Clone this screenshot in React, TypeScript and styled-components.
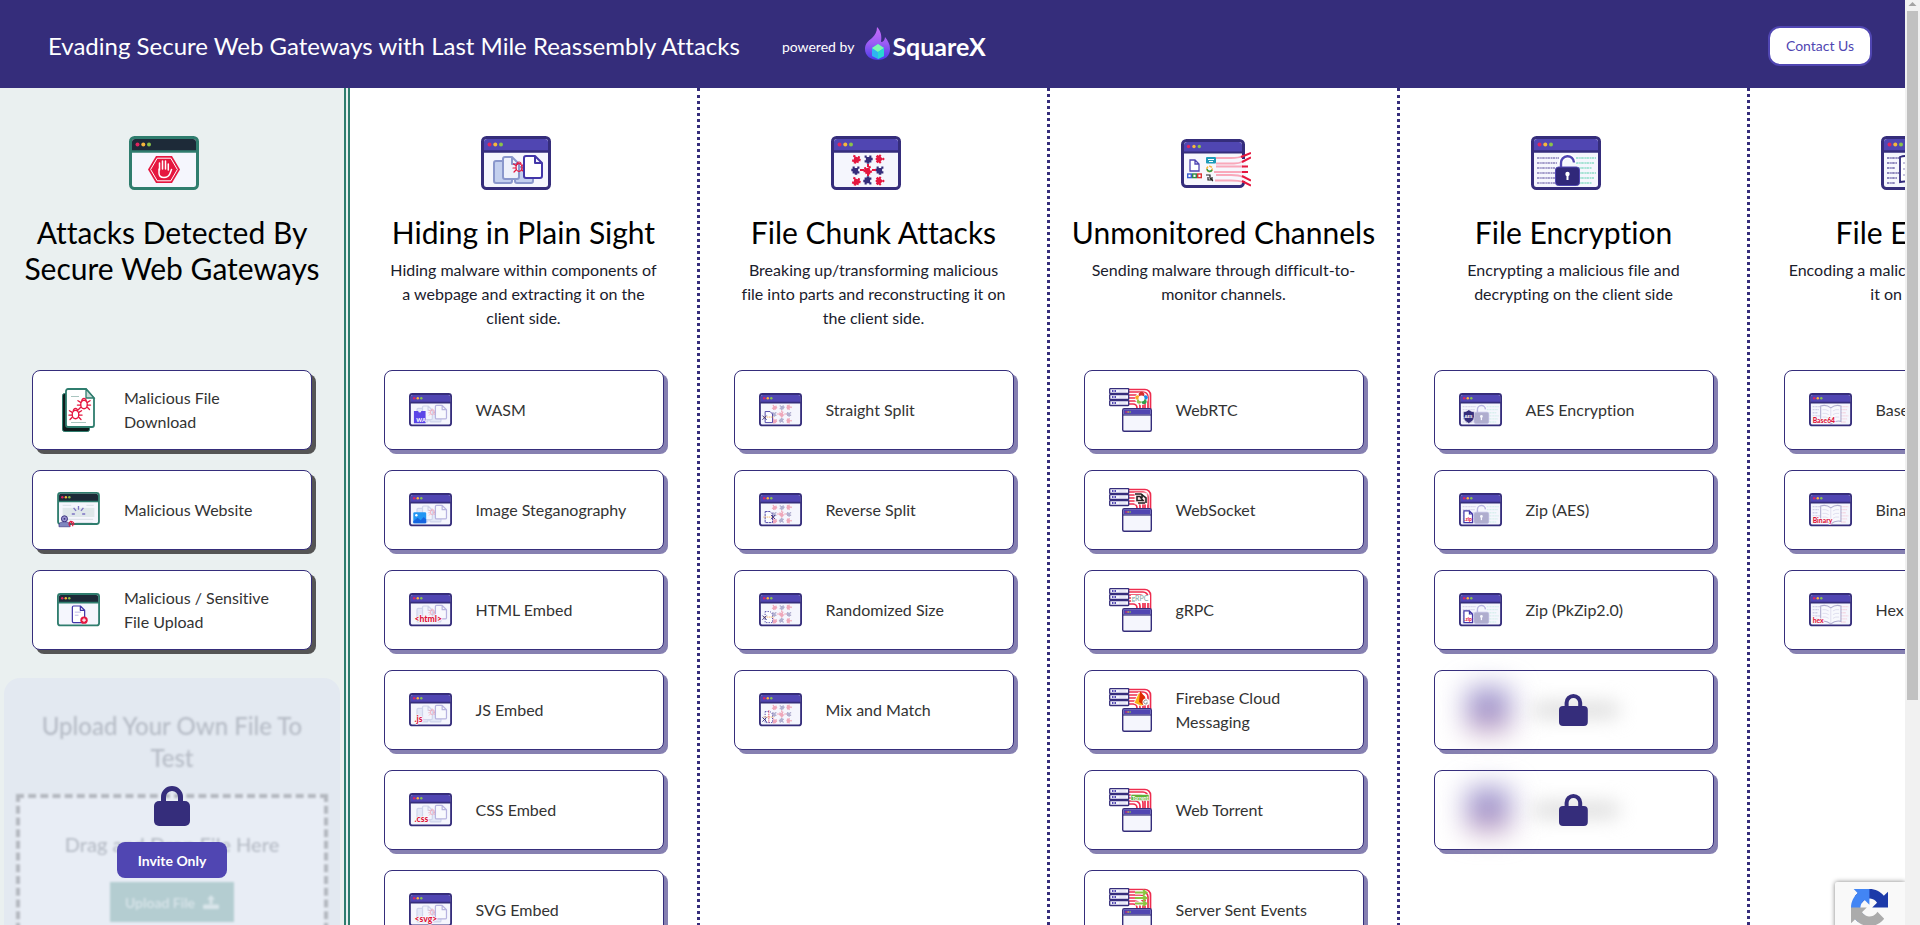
import React from 'react';
import styled, { createGlobalStyle } from 'styled-components';

const navy = '#352d7b';
const violet = '#5046b2';
const teal = '#2f7d6e';
const red = '#e5173f';

const GlobalStyle = createGlobalStyle`
  *, *::before, *::after { box-sizing: border-box; }
  body {
    margin: 0;
    background: #fff;
    font-family: Lato, "Noto Sans", sans-serif;
    font-variant-ligatures: none;
  }
  h1, h2, h3, p, ul { margin: 0; padding: 0; font-weight: 400; }
  button { font-family: inherit; font-variant-ligatures: none; cursor: pointer; }
`;

/* ---------- page frame ---------- */

const Shell = styled.div`
  display: flex;
  height: 100vh;
  overflow: hidden;
`;

const Page = styled.div`
  flex: 1;
  min-width: 0;
  display: flex;
  flex-direction: column;
`;

const ScrollTrack = styled.div`
  width: 15px;
  padding: 0 2px;
  background: #f1f1f1;
  display: flex;
  flex-direction: column;
`;

const ScrollArrow = styled.svg`
  width: 11px;
  height: 11px;
  flex: none;
`;

const ScrollThumb = styled.div`
  flex: 689;
  background: #c1c1c1;
`;

const ScrollRest = styled.div`
  flex: 225;
`;

/* ---------- header ---------- */

const Header = styled.header`
  display: flex;
  align-items: center;
  height: 88px;
  flex: none;
  padding: 4px 33px 0 48px;
  background: ${navy};
  color: #fff;
`;

const Title = styled.h1`
  font-size: 24px;
  line-height: 32px;
`;

const Brand = styled.a`
  display: flex;
  align-items: center;
  margin-left: 42px;
  padding-bottom: 4px;
  color: #fff;
  text-decoration: none;
`;

const PoweredBy = styled.span`
  font-size: 14px;
  line-height: 20px;
  padding-top: 6px;
  margin-right: 10px;
`;

const BrandName = styled.span`
  font-size: 25px;
  line-height: 32px;
  font-weight: 700;
  padding-top: 4px;
`;

const ContactButton = styled.button`
  margin-left: auto;
  width: 104px;
  height: 40px;
  border: 2px solid ${violet};
  border-radius: 12px;
  background: #fff;
  color: ${violet};
  font-size: 14px;
  line-height: 20px;
`;

/* ---------- columns ---------- */

const Columns = styled.main`
  flex: 1;
  display: flex;
  overflow: auto;
  scrollbar-width: none;
`;

const Column = styled.section<{ $detected?: boolean }>`
  flex: none;
  width: 350px;
  height: max-content;
  min-height: 100%;
  display: flex;
  flex-direction: column;
  background: ${p => (p.$detected ? '#eaf0f0' : '#fff')};
  border-right: ${p => (p.$detected ? `6px double ${teal}` : `3px dotted ${navy}`)};
`;

const ColumnHead = styled.div`
  min-height: 282px;
  padding: 40px 16px 0;
  display: flex;
  flex-direction: column;
  align-items: center;
  text-align: center;
`;

const HeadIcon = styled.div`
  width: 86px;
  height: 70px;
  padding-right: 16px;
  margin-bottom: 16px;
  display: flex;
  align-items: center;
`;

const ColumnTitle = styled.h2`
  font-size: 30px;
  line-height: 36px;
  margin-bottom: 8px;
  color: #000;
`;

const Description = styled.p`
  max-width: 272px;
  font-size: 16px;
  line-height: 24px;
  color: #1a202c;
`;

const CardList = styled.ul`
  list-style: none;
  display: flex;
  flex-direction: column;
  align-items: center;
  gap: 20px;
`;

const Card = styled.button<{ $detected?: boolean; $locked?: boolean }>`
  position: relative;
  width: 280px;
  height: 80px;
  padding: 0 ${p => (p.$locked ? 32 : 24)}px;
  display: flex;
  align-items: center;
  gap: 24px;
  background: #fff;
  border: 1px solid ${navy};
  border-radius: 8px;
  box-shadow: 4px 4px 0 ${p => (p.$detected ? '#555' : '#8680b1')};
  color: #333;
  font-size: 16px;
  line-height: 24px;
  text-align: left;

  & > svg { flex: none; }
`;

const BlurredIcon = styled.span`
  width: 43px;
  height: 44px;
  background: linear-gradient(#9a90cb 50%, #cfa3bd);
  filter: blur(14px);
`;

const BlurredLabel = styled.span`
  width: 84px;
  height: 12px;
  background: #d0d0d0;
  filter: blur(10px);
`;

const CardLock = styled.span`
  position: absolute;
  inset: 0;
  display: flex;
  align-items: center;
  justify-content: center;
`;

/* ---------- upload panel ---------- */

const UploadPanel = styled.div`
  position: relative;
  margin: 28px 4px 16px;
  border-radius: 16px;
  background: #e3e9f1;
`;

const UploadBody = styled.div`
  padding: 32px 12px 20px;
  filter: blur(1px);
  text-align: center;
  color: #b6bcc6;
`;

const UploadTitle = styled.h3`
  font-size: 24px;
  line-height: 32px;
  font-weight: 500;
  padding: 0 16px;
  margin-bottom: 20px;
`;

const DropZone = styled.div`
  border: 4px dashed #b3b7bf;
  background: #e8edf5;
  padding: 34px 16px 40px;
  display: flex;
  flex-direction: column;
  align-items: center;
  gap: 26px;
`;

const DropText = styled.p`
  font-size: 20px;
  line-height: 24px;
  font-weight: 500;
`;

const UploadButton = styled.button`
  width: 124px;
  height: 40px;
  border: 0;
  background: #b4cdd1;
  color: #d9e5ea;
  display: flex;
  align-items: center;
  justify-content: center;
  gap: 8px;
  font-size: 14px;
  font-weight: 600;
`;

const UploadOverlay = styled.div`
  position: absolute;
  inset: 0;
  display: flex;
  flex-direction: column;
  align-items: center;
  justify-content: center;
  gap: 16px;
`;

const InviteButton = styled.button`
  width: 110px;
  height: 36px;
  border: 0;
  border-radius: 8px;
  background: ${violet};
  color: #fff;
  font-size: 14px;
  font-weight: 700;
`;

const Captcha = styled.aside`
  position: fixed;
  right: 15px;
  bottom: -17px;
  width: 70px;
  height: 60px;
  padding: 7px 16px;
  background: #f9f9f9;
  border-radius: 2px 0 0 2px;
  box-shadow: 0 0 5px gray;
  clip-path: inset(-8px 0 -8px -8px);
`;

/* ---------- drawings ---------- */

const Lock = ({ size }: { size: number }) => (
  <svg width={size * 0.9} height={size} viewBox="0 0 36 40" aria-hidden="true">
    <rect x="0" y="15" width="36" height="25" rx="5" fill={navy} />
    <path d="M9.500 17V11a8.500 8.500 0 0 1 17 0v6" fill="none" stroke={navy} strokeWidth="5" />
  </svg>
);

const Flame = () => (
  <svg width="28" height="34" viewBox="0 0 28 34" aria-hidden="true">
    <defs>
      <linearGradient id="flame" x1="0" y1="0" x2="0" y2="1">
        <stop offset="0" stopColor="#c86bfa" />
        <stop offset="0.5" stopColor="#9a5cf5" />
        <stop offset="1" stopColor="#4b3be8" />
      </linearGradient>
    </defs>
    <path d="M13 0c4 4 5 9 4 15 2 0 4-2 4-5 3 4 5 7 5 12 0 7-5 11-12 11S1 29 1 22c0-5 3-8 7-11 3-3 5-6 5-11z" fill="url(#flame)" />
    <path d="M14 17l6 4v8l-6 3-6-3v-8z" fill="#2fb4f0" />
    <path d="M14 17l6 4-6 4-6-4z" fill="#7dfab0" />
    <path d="M14 25l6-4v8l-6 3z" fill="#28d7d2" />
  </svg>
);

type Kids = { children?: React.ReactNode };

const WindowFrame = ({ green, children, w = 70 }: Kids & { green?: boolean; w?: number }) => (
  <g>
    <rect x="1.500" y="1.500" width={w - 3} height="51" rx="4" fill="#f5f6fd" stroke={green ? teal : navy} strokeWidth="3" />
    <path d={`M3 16V6a3 3 0 0 1 3-3H${w - 6}a3 3 0 0 1 3 3V16z`} fill={green ? '#1d2a38' : violet} />
    <path d={`M2 15.500H${w - 2}`} stroke={green ? teal : navy} strokeWidth="2.500" />
    <circle cx="8.500" cy="8.500" r="2" fill="#e0245e" />
    <circle cx="14.300" cy="8.500" r="2" fill="#f6b73c" />
    <circle cx="20" cy="8.500" r="2" fill="#8bc34a" />
    {children}
  </g>
);

const Sheet = ({ x, y, w, h, fill, stroke }: { x: number; y: number; w: number; h: number; fill: string; stroke: string }) => (
  <path
    d={`M${x + 2} ${y}h${w - 9}l7 7v${h - 9}a2 2 0 0 1-2 2h${4 - w}a2 2 0 0 1-2-2v${4 - h}a2 2 0 0 1 2-2zM${x + w - 7} ${y}v7h7`}
    fill={fill}
    stroke={stroke}
    strokeWidth="2"
    strokeLinejoin="round"
  />
);

const Bug = ({ x, y, s = 1 }: { x: number; y: number; s?: number }) => (
  <g transform={`translate(${x} ${y}) scale(${s})`} fill="none" stroke={red} strokeWidth="1.200" strokeLinecap="round">
    <ellipse cx="0" cy="0.500" rx="3" ry="3.800" />
    <path d="M-2-3a2 2 0 0 1 4 0M-3-1.500l-2.500-1.500M3-1.500l2.500-1.500M-3 1h-3M3 1h3M-3 3l-2 2M3 3l2 2" />
  </g>
);

const Docs = () => (
  <>
    <Sheet x={13} y={25} w={18} h={22} fill="#c3cfee" stroke="#8a97cc" />
    <Sheet x={34} y={31} w={18} h={16} fill="#c3cfee" stroke="#8a97cc" />
    <Sheet x={22} y={21} w={16} h={22} fill="#eef1fb" stroke="#8a97cc" />
    <Bug x={38} y={31} />
    <Sheet x={43} y={20} w={18} h={22} fill="#fff" stroke="#4236a8" />
  </>
);

const Piece = ({ x, y, r, c }: { x: number; y: number; r: number; c: string }) => (
  <path
    transform={`translate(${x} ${y}) rotate(${r}) scale(0.850)`}
    d="M-4-4h2.500v1.500h3V-4H4v2.500h1.500v3H4V4H1.500v1.500h-3V4H-4V1.500h1.500v-3H-4z"
    fill={c}
  />
);

const Puzzle = () => (
  <>
    {[0, 1, 2].map(r =>
      [0, 1, 2].map(c => (
        <Piece key={`${r}${c}`} x={25 + c * 12} y={23 + r * 11} r={(r + c) % 2 ? r * 90 : 15 + c * 60} c={(r + c) % 2 ? navy : red} />
      )),
    )}
    <path d="M29 34h4M41 34h4M37 28v3M37 37v3" stroke={red} strokeWidth="2" />
  </>
);

const CodeLines = ({ x, w, c }: { x: number; w: number; c: string }) => (
  <path
    d={[22, 27, 32, 37, 42, 47].map((y, i) => `M${x} ${y}h${w - (i % 3) * 2}`).join('')}
    stroke={c}
    strokeWidth="2.200"
    strokeDasharray="2.500 0.700 1.500 0.500"
  />
);

const OpenLock = () => (
  <>
    <CodeLines x={6} w={22} c="#a39dcb" />
    <CodeLines x={45} w={20} c="#a6e3d4" />
    <path d="M30 32v-5a6.500 6.500 0 0 1 13-0.500" fill="none" stroke="#fff" strokeWidth="5" />
    <path d="M30 32v-5a6.500 6.500 0 0 1 13-0.500" fill="none" stroke={violet} strokeWidth="2.400" />
    <rect x="24.500" y="31" width="24" height="18.500" rx="3" fill="#30287a" stroke={violet} />
    <circle cx="36.500" cy="38" r="2.200" fill="#fff" />
    <path d="M36.500 38v6" stroke="#fff" strokeWidth="2" />
  </>
);

const Book = () => (
  <>
    <CodeLines x={6} w={12} c="#8d86bd" />
    <CodeLines x={52} w={12} c="#f29aae" />
    <path d="M19 21q9-3 16.500 3q8-6 16.500-3v25q-9-2-16.500 4q-8-6-16.500-4z" fill="#fff" stroke="#30287a" strokeWidth="1.800" />
    <path d="M35.500 24v26M22 27q6-1 10 2M22 33q6-1 10 2M22 39q6-1 10 2M49 27q-6-1-10 2M49 33q-6-1-10 2M49 39q-6-1-10 2" fill="none" stroke="#8d86bd" />
  </>
);

const HeadSvg = ({ children }: Kids) => (
  <svg width="70" height="54" viewBox="0 0 70 54" aria-hidden="true">{children}</svg>
);

const StopIcon = () => (
  <HeadSvg>
    <WindowFrame green>
      <path d="M27 20h16l8 13.500L43 47H27l-8-13.500z" fill={red} />
      <path d="M28.200 22.200h13.600l6.600 11.300-6.600 11.300H28.200l-6.600-11.300z" fill="none" stroke="#fff" strokeWidth="1" />
      <path d="M30.500 34v-7M33.500 33v-8M36.500 33v-8M39.300 34v-6M30 33v4c0 3 2 4.500 5 4.500s5-1.500 6-4l1.500-4" fill="none" stroke="#fff" strokeWidth="1.500" strokeLinecap="round" />
    </WindowFrame>
  </HeadSvg>
);

const ChannelsIcon = () => (
  <HeadSvg>
    <g transform="translate(0 3)">
      <rect x="1.500" y="1.500" width="61" height="46" rx="4" fill="#f7f7fd" stroke={navy} strokeWidth="3" />
      <path d="M3 14V6a3 3 0 0 1 3-3h52a3 3 0 0 1 3 3v8z" fill={violet} />
      <path d="M2 13.500h60" stroke={navy} strokeWidth="2" />
      <circle cx="7.500" cy="7.500" r="1.700" fill="#e0245e" />
      <circle cx="13" cy="7.500" r="1.700" fill="#f6b73c" />
      <circle cx="18.300" cy="7.500" r="1.700" fill="#8bc34a" />
      <path d="M9 21h5l4 4v7H9zM14 21v4h4" fill="#fff" stroke={violet} strokeWidth="1.300" />
      <rect x="6.700" y="35" width="3.600" height="3.600" fill="#fff" stroke="#3a5fcf" strokeWidth="1.400" />
      <rect x="11.700" y="35" width="3.600" height="3.600" fill="#fff" stroke="#2f8a4a" strokeWidth="1.400" />
      <rect x="16.700" y="35" width="3.600" height="3.600" fill="#fff" stroke="#d33" strokeWidth="1.400" />
      <rect x="60" y="20" width="5" height="22" fill="#f7f7fd" />
      <g fill="none" stroke="#f9a8ba" strokeWidth="1.800">
        <path d="M35 19h15q8 0 12-2M35 24.500h18q5 0 9-2M35 27.500h27M33 33h29M35 36h15q8 0 12 2M34 41.500h16q8 0 12 1.500" />
      </g>
      <g fill="none" stroke={red} strokeWidth="2">
        <path d="M60 18l10-4M61 23l9-4.500M61 27.500h6M61 33h6M61 37l9 4.500M61 42l9 4.500" />
      </g>
      <rect x="25" y="18" width="10" height="6.500" rx="1" fill="#1d9ab8" />
      <path d="M27 20.500h6M28 22.500h4" stroke="#fff" />
      <circle cx="28.500" cy="30" r="2.700" fill="none" stroke="#f6b73c" strokeWidth="1.600" strokeDasharray="3 1" />
      <path d="M26 30a2.700 2.700 0 0 0 5 1" fill="none" stroke="#2f9a4a" strokeWidth="1.600" />
      <path d="M25 36h4v3l3 3M27 38v3h5M31 38v3" fill="none" stroke="#222" strokeWidth="1.200" />
    </g>
  </HeadSvg>
);

const SmallWindow = ({ children, green, base }: Kids & { green?: boolean; base?: React.ReactNode }) => (
  <svg width="43" height="34" viewBox="0 0 70 55" aria-hidden="true">
    <WindowFrame green={green}>
      <g opacity="0.350">{base}</g>
      {children}
    </WindowFrame>
  </svg>
);

const Tag = ({ text, x = 9, size = 14, y = 47 }: { text: string; x?: number; size?: number; y?: number }) => (
  <text x={x} y={y} fontFamily="Lato, sans-serif" fontSize={size} fontWeight="900" fill="#dc143c" stroke="#fff" strokeWidth="2" paintOrder="stroke">
    {text}
  </text>
);

const DocsIcon = ({ children }: Kids) => <SmallWindow base={<Docs />}>{children}</SmallWindow>;

const WasmIcon = () => (
  <DocsIcon>
    <path d="M8 29h7a2.500 2.500 0 0 0 5 0h7v20H8z" fill="#5b45e8" />
    <text x="12" y="47" fontFamily="Lato, sans-serif" fontSize="9" fontWeight="900" fill="#fff">WA</text>
  </DocsIcon>
);

const ImageIcon = () => (
  <DocsIcon>
    <rect x="7" y="31" width="21" height="18" rx="2" fill="#2196f3" />
    <circle cx="12" cy="36" r="2" fill="#fff" />
    <path d="M7 46l7-6 5 4 5-5 4 4v6H7z" fill="#1565e0" />
  </DocsIcon>
);

const SplitIcon = ({ variant }: { variant: number }) => (
  <SmallWindow base={<Puzzle />}>
    <path d="M10 30h8l4 4v14H10z" fill="#fff" fillOpacity="0.700" stroke="#4a3fa5" strokeWidth="1.500" strokeDasharray={variant > 1 ? '2 2' : variant ? '4 1' : undefined} />
    <path d="M7 39h18" stroke="#f0a03c" strokeWidth="1.200" strokeDasharray="2 1" />
    {variant === 3 && <path d="M16 28v21" stroke={red} strokeWidth="1.200" strokeDasharray="2 1" />}
    <path
      transform={variant === 1 ? 'translate(14 -1)' : variant === 3 ? 'translate(0 3)' : undefined}
      d="M6 37l6 6M12 37l-6 6"
      stroke={navy}
      strokeWidth="1.500"
      strokeLinecap="round"
    />
  </SmallWindow>
);

const AesIcon = () => (
  <SmallWindow base={<OpenLock />}>
    <path d="M16 27q4 3.500 9 3.500v8q0 7-9 11-9-4-9-11v-8q5 0 9-3.500z" fill={navy} stroke="#fff" />
    <text x="9" y="40" fontFamily="Lato, sans-serif" fontSize="7" fontWeight="900" fill="#fff">AES</text>
  </SmallWindow>
);

const ZipIcon = () => (
  <SmallWindow base={<OpenLock />}>
    <path d="M8 29h9l5 5v14H8zM17 29v5h5" fill="#fff" stroke="#4236a8" strokeWidth="2" />
    <text x="8.500" y="45" fontFamily="Lato, sans-serif" fontSize="8" fontWeight="900" fill={red}>.zip</text>
  </SmallWindow>
);

const EncodeIcon = ({ text }: { text: string }) => (
  <SmallWindow base={<Book />}>
    <Tag text={text} x={6} size={11} y={48} />
  </SmallWindow>
);

const MaliciousFileIcon = () => (
  <svg width="43" height="44" viewBox="0 0 43 44" aria-hidden="true">
    <rect x="5.500" y="5.500" width="27" height="38" rx="2" fill="#0e1c1c" stroke={teal} />
    <path d="M11 1h18l8 9v27a2 2 0 0 1-2 2H11a2 2 0 0 1-2-2V3a2 2 0 0 1 2-2z" fill="#fff" stroke={teal} strokeWidth="1.800" />
    <path d="M29 1v9h8z" fill="#c9dcd8" stroke={teal} strokeWidth="1.300" />
    <path d="M14 8.500h8M14 34.500h15" stroke="#a9c5bf" />
    <Bug x={27} y={16} s={1.1} />
    <Bug x={18.5} y={26} s={1.1} />
  </svg>
);

const MaliciousSiteIcon = () => (
  <svg width="43" height="36" viewBox="0 0 70 59" aria-hidden="true">
    <WindowFrame green>
      <path d="M9 22h14M9 45h50M48 22h12M30 50h28" stroke="#dde3ea" strokeWidth="2" />
      <rect x="9" y="26" width="52" height="15" fill="#dfe7ea" />
      <path d="M35 23v6M27 26l4 5M43 26l-4 5M24 36h5M46 36h-5" stroke="#7d74c4" strokeWidth="2.200" />
    </WindowFrame>
    <circle cx="12" cy="44" r="5" fill="#9a93cf" stroke={navy} strokeWidth="1.500" />
    <path d="M3 57v-3q0-5 9-5t9 5v3z" fill="#7f86bf" stroke={navy} />
    <circle cx="12" cy="44" r="1.500" fill={navy} />
    <path d="M22 47l4 9M27 54a4 4 0 1 0-5 2" fill="none" stroke={red} strokeWidth="1.800" />
  </svg>
);

const UploadRiskIcon = () => (
  <SmallWindow green>
    <Sheet x={25} y={21} w={20} h={27} fill="#fff" stroke="#4236a8" />
    <path d="M29 31h10M29 36h6" stroke="#b9b3e4" strokeWidth="1.500" />
    <circle cx="44" cy="44" r="6" fill={red} />
    <path d="M44 41v6M41 44h6" stroke="#fff" strokeWidth="1.800" />
  </SmallWindow>
);

const ServerIcon = ({ children }: Kids) => (
  <svg width="43" height="44" viewBox="0 0 43 44" aria-hidden="true">
    <g fill="none" stroke="#ee2c4e" strokeWidth="1.700">
      <path d="M20 1.500h16a5.500 5.500 0 0 1 5.500 5.500v14M20 4h14a5 5 0 0 1 5 5v12M20 7h11a5 5 0 0 1 5 5v9M20 10h9a5 5 0 0 1 5 5v6M20 13h6a5 5 0 0 1 5 5v3M20 16h4a4 4 0 0 1 4 4v1" />
    </g>
    {children}
    {[0, 6, 12].map(y => (
      <g key={y}>
        <rect x="0.700" y={y + 0.7} width="19" height="4.800" rx="0.500" fill="#f4f4fd" stroke={navy} strokeWidth="1.300" />
        <path d={`M3 ${y + 3}h1.500M5.500 ${y + 3}h1.500`} stroke={violet} strokeWidth="1.800" />
        <path d={`M10 ${y + 3}h7`} stroke="#dcdcf2" />
      </g>
    ))}
    <rect x="13.700" y="20.700" width="28.600" height="22.600" rx="1.500" fill="#f5f6fd" stroke={navy} strokeWidth="1.400" />
    <path d="M14.400 21.400h27.200v5H14.400z" fill={violet} />
    <path d="M14 27h28" stroke={navy} strokeWidth="1.200" />
    <path d="M16.500 24h1.300" stroke="#e0245e" strokeWidth="1.300" />
    <path d="M18.500 24h1.300" stroke="#f6b73c" strokeWidth="1.300" />
    <path d="M20.500 24h1.300" stroke="#8bc34a" strokeWidth="1.300" />
  </svg>
);

const WebRtcIcon = () => (
  <ServerIcon>
    <circle cx="32.500" cy="10.500" r="6.500" fill="#fff" />
    <circle cx="32.500" cy="6.500" r="2.800" fill="#d32f2f" />
    <circle cx="28.500" cy="9.500" r="2.300" fill="#f9a825" />
    <circle cx="36.500" cy="9.500" r="2.300" fill="#1e88e5" />
    <circle cx="30" cy="13.500" r="2.300" fill="#8bc34a" />
    <circle cx="35" cy="13.500" r="2.600" fill="#2e9e4a" />
    <circle cx="32.500" cy="10.500" r="3" fill="#fff" />
  </ServerIcon>
);

const WebSocketIcon = () => (
  <ServerIcon>
    <rect x="25.500" y="4.500" width="13" height="12" fill="#fff" fillOpacity="0.800" />
    <path d="M26 6h6l5 4v5M28 8.500h3l3 4h-6zM36 15h-7M33 6v4" fill="none" stroke="#222" strokeWidth="1.600" />
  </ServerIcon>
);

const GrpcIcon = () => (
  <ServerIcon>
    <rect x="22" y="7" width="19" height="8" fill="#fff" />
    <text x="22.500" y="13" fontFamily="Lato, sans-serif" fontSize="7" fill="#7fa3a3">gRPC</text>
  </ServerIcon>
);

const FirebaseIcon = () => (
  <ServerIcon>
    <path d="M25 15l5-11 8 12-6 2z" fill="#fbb117" stroke="#fff" strokeWidth="0.800" />
    <path d="M31 3l5 6-2 8-4-3z" fill="#dd2c00" />
    <circle cx="37" cy="14" r="3.500" fill="#fff" />
    <path d="M38.500 13a2 2 0 1 0 0 2h-1.500" fill="none" stroke="#777" strokeWidth="0.800" />
  </ServerIcon>
);

const TorrentIcon = () => (
  <ServerIcon>
    <rect x="22" y="6.500" width="18" height="6" fill="#5fb234" stroke="#fff" strokeWidth="0.600" />
    <text x="23" y="11.500" fontFamily="Lato, sans-serif" fontSize="5" fontWeight="700" fill="#fff">Torrent</text>
  </ServerIcon>
);

const EventsIcon = () => (
  <ServerIcon>
    <path d="M26 4.500h11M26 10h11M26 15.500h11" stroke="#fff" strokeWidth="4" />
    <path d="M26 4.500h11M34 2l3.500 2.500L34 7M26 10h11M34 7.500l3.500 2.500-3.500 2.500M26 15.500h11M34 13l3.500 2.500L34 18" fill="none" stroke="#8bc53f" strokeWidth="1.800" />
  </ServerIcon>
);

const UploadGlyph = () => (
  <svg width="16" height="14" viewBox="0 0 16 14" aria-hidden="true">
    <path d="M8 0l4 4.500H9.500V9h-3V4.500H4z" fill="currentColor" />
    <rect x="0" y="9.500" width="16" height="4.500" rx="1" fill="currentColor" />
  </svg>
);

const CaptchaLogo = () => (
  <svg width="37" height="37" viewBox="0 0 64 64" role="img" aria-label="reCAPTCHA">
    <path fill="#1c3aa9" d="M64 31.955l-.033-1.370V4.687l-7.160 7.160C50.948 4.674 42.033.093 32.050.093c-10.400 0-19.622 4.960-25.458 12.640l11.736 11.860a15.550 15.550 0 0 1 4.754-5.334c2.050-1.600 4.952-2.906 8.968-2.906.485 0 .860.057 1.135.163 4.976.393 9.288 3.140 11.828 7.124l-8.307 8.307L64 31.953" />
    <path fill="#4285f4" d="M31.862.094l-1.370.033H4.594l7.160 7.160C4.580 13.147 0 22.060 0 32.046c0 10.400 4.960 19.622 12.640 25.458L24.500 45.768a15.550 15.550 0 0 1-5.334-4.754c-1.600-2.050-2.906-4.952-2.906-8.968 0-.485.057-.860.163-1.135.393-4.976 3.140-9.288 7.124-11.828l8.307 8.307L31.860.095" />
    <path fill="#ababab" d="M.001 32.045l.033 1.370v25.898l7.160-7.160c5.860 7.173 14.774 11.754 24.760 11.754 10.400 0 19.622-4.960 25.458-12.640l-11.736-11.860a15.550 15.550 0 0 1-4.754 5.334c-2.050 1.600-4.952 2.906-8.968 2.906-.485 0-.860-.057-1.135-.163-4.976-.393-9.288-3.140-11.828-7.124l8.307-8.307c-10.522.040-22.400.066-27.295-.005" />
  </svg>
);

/* ---------- data ---------- */

type Item = { label: string; icon?: React.ReactNode; locked?: boolean };
type Group = { title: string; text?: string; icon: React.ReactNode; items: Item[]; detected?: boolean };

const groups: Group[] = [
  {
    title: 'Attacks Detected By Secure Web Gateways',
    icon: <StopIcon />,
    detected: true,
    items: [
      { label: 'Malicious File Download', icon: <MaliciousFileIcon /> },
      { label: 'Malicious Website', icon: <MaliciousSiteIcon /> },
      { label: 'Malicious / Sensitive File Upload', icon: <UploadRiskIcon /> },
    ],
  },
  {
    title: 'Hiding in Plain Sight',
    text: 'Hiding malware within components of a webpage and extracting it on the client side.',
    icon: <HeadSvg><WindowFrame><Docs /></WindowFrame></HeadSvg>,
    items: [
      { label: 'WASM', icon: <WasmIcon /> },
      { label: 'Image Steganography', icon: <ImageIcon /> },
      { label: 'HTML Embed', icon: <DocsIcon><Tag text="<html>" /></DocsIcon> },
      { label: 'JS Embed', icon: <DocsIcon><Tag text=".js" /></DocsIcon> },
      { label: 'CSS Embed', icon: <DocsIcon><Tag text=".css" /></DocsIcon> },
      { label: 'SVG Embed', icon: <DocsIcon><Tag text="<svg>" /></DocsIcon> },
    ],
  },
  {
    title: 'File Chunk Attacks',
    text: 'Breaking up/transforming malicious file into parts and reconstructing it on the client side.',
    icon: <HeadSvg><WindowFrame><Puzzle /></WindowFrame></HeadSvg>,
    items: [
      { label: 'Straight Split', icon: <SplitIcon variant={0} /> },
      { label: 'Reverse Split', icon: <SplitIcon variant={1} /> },
      { label: 'Randomized Size', icon: <SplitIcon variant={2} /> },
      { label: 'Mix and Match', icon: <SplitIcon variant={3} /> },
    ],
  },
  {
    title: 'Unmonitored Channels',
    text: 'Sending malware through difficult-to-monitor channels.',
    icon: <ChannelsIcon />,
    items: [
      { label: 'WebRTC', icon: <WebRtcIcon /> },
      { label: 'WebSocket', icon: <WebSocketIcon /> },
      { label: 'gRPC', icon: <GrpcIcon /> },
      { label: 'Firebase Cloud Messaging', icon: <FirebaseIcon /> },
      { label: 'Web Torrent', icon: <TorrentIcon /> },
      { label: 'Server Sent Events', icon: <EventsIcon /> },
    ],
  },
  {
    title: 'File Encryption',
    text: 'Encrypting a malicious file and decrypting on the client side',
    icon: <HeadSvg><WindowFrame><OpenLock /></WindowFrame></HeadSvg>,
    items: [
      { label: 'AES Encryption', icon: <AesIcon /> },
      { label: 'Zip (AES)', icon: <ZipIcon /> },
      { label: 'Zip (PkZip2.0)', icon: <ZipIcon /> },
      { label: 'Locked attack 1', locked: true },
      { label: 'Locked attack 2', locked: true },
    ],
  },
  {
    title: 'File Encoding',
    text: 'Encoding a malicious file and decoding it on client side',
    icon: <HeadSvg><WindowFrame><Book /></WindowFrame></HeadSvg>,
    items: [
      { label: 'Base64', icon: <EncodeIcon text="Base64" /> },
      { label: 'Binary', icon: <EncodeIcon text="Binary" /> },
      { label: 'Hex', icon: <EncodeIcon text="hex" /> },
    ],
  },
];

const AttackCard = ({ item, detected }: { item: Item; detected?: boolean }) =>
  item.locked ? (
    <Card type="button" $locked aria-label={item.label}>
      <BlurredIcon />
      <BlurredLabel />
      <CardLock><Lock size={32} /></CardLock>
    </Card>
  ) : (
    <Card type="button" $detected={detected}>
      {item.icon}
      <span>{item.label}</span>
    </Card>
  );

const Upload = () => (
  <UploadPanel>
    <UploadBody>
      <UploadTitle>Upload Your Own File To Test</UploadTitle>
      <DropZone>
        <DropText>Drag and Drop File Here</DropText>
        <UploadButton type="button">Upload File <UploadGlyph /></UploadButton>
      </DropZone>
    </UploadBody>
    <UploadOverlay>
      <Lock size={40} />
      <InviteButton type="button">Invite Only</InviteButton>
    </UploadOverlay>
  </UploadPanel>
);

export default function App() {
  return (
    <Shell>
      <GlobalStyle />
      <Page>
        <Header>
          <Title>Evading Secure Web Gateways with Last Mile Reassembly Attacks</Title>
          <Brand href="#squarex">
            <PoweredBy>powered by</PoweredBy>
            <Flame />
            <BrandName>SquareX</BrandName>
          </Brand>
          <ContactButton type="button">Contact Us</ContactButton>
        </Header>
        <Columns>
          {groups.map(g => (
            <Column key={g.title} $detected={g.detected}>
              <ColumnHead>
                <HeadIcon>{g.icon}</HeadIcon>
                <ColumnTitle>{g.title}</ColumnTitle>
                {g.text && <Description>{g.text}</Description>}
              </ColumnHead>
              <CardList>
                {g.items.map(item => (
                  <li key={item.label}><AttackCard item={item} detected={g.detected} /></li>
                ))}
              </CardList>
              {g.detected && <Upload />}
            </Column>
          ))}
        </Columns>
      </Page>
      <Captcha><CaptchaLogo /></Captcha>
      <ScrollTrack aria-hidden="true">
        <ScrollArrow viewBox="0 0 11 11"><path d="M5.500 2l4 4h-8z" fill="#a3a3a3" /></ScrollArrow>
        <ScrollThumb />
        <ScrollRest />
      </ScrollTrack>
    </Shell>
  );
}
